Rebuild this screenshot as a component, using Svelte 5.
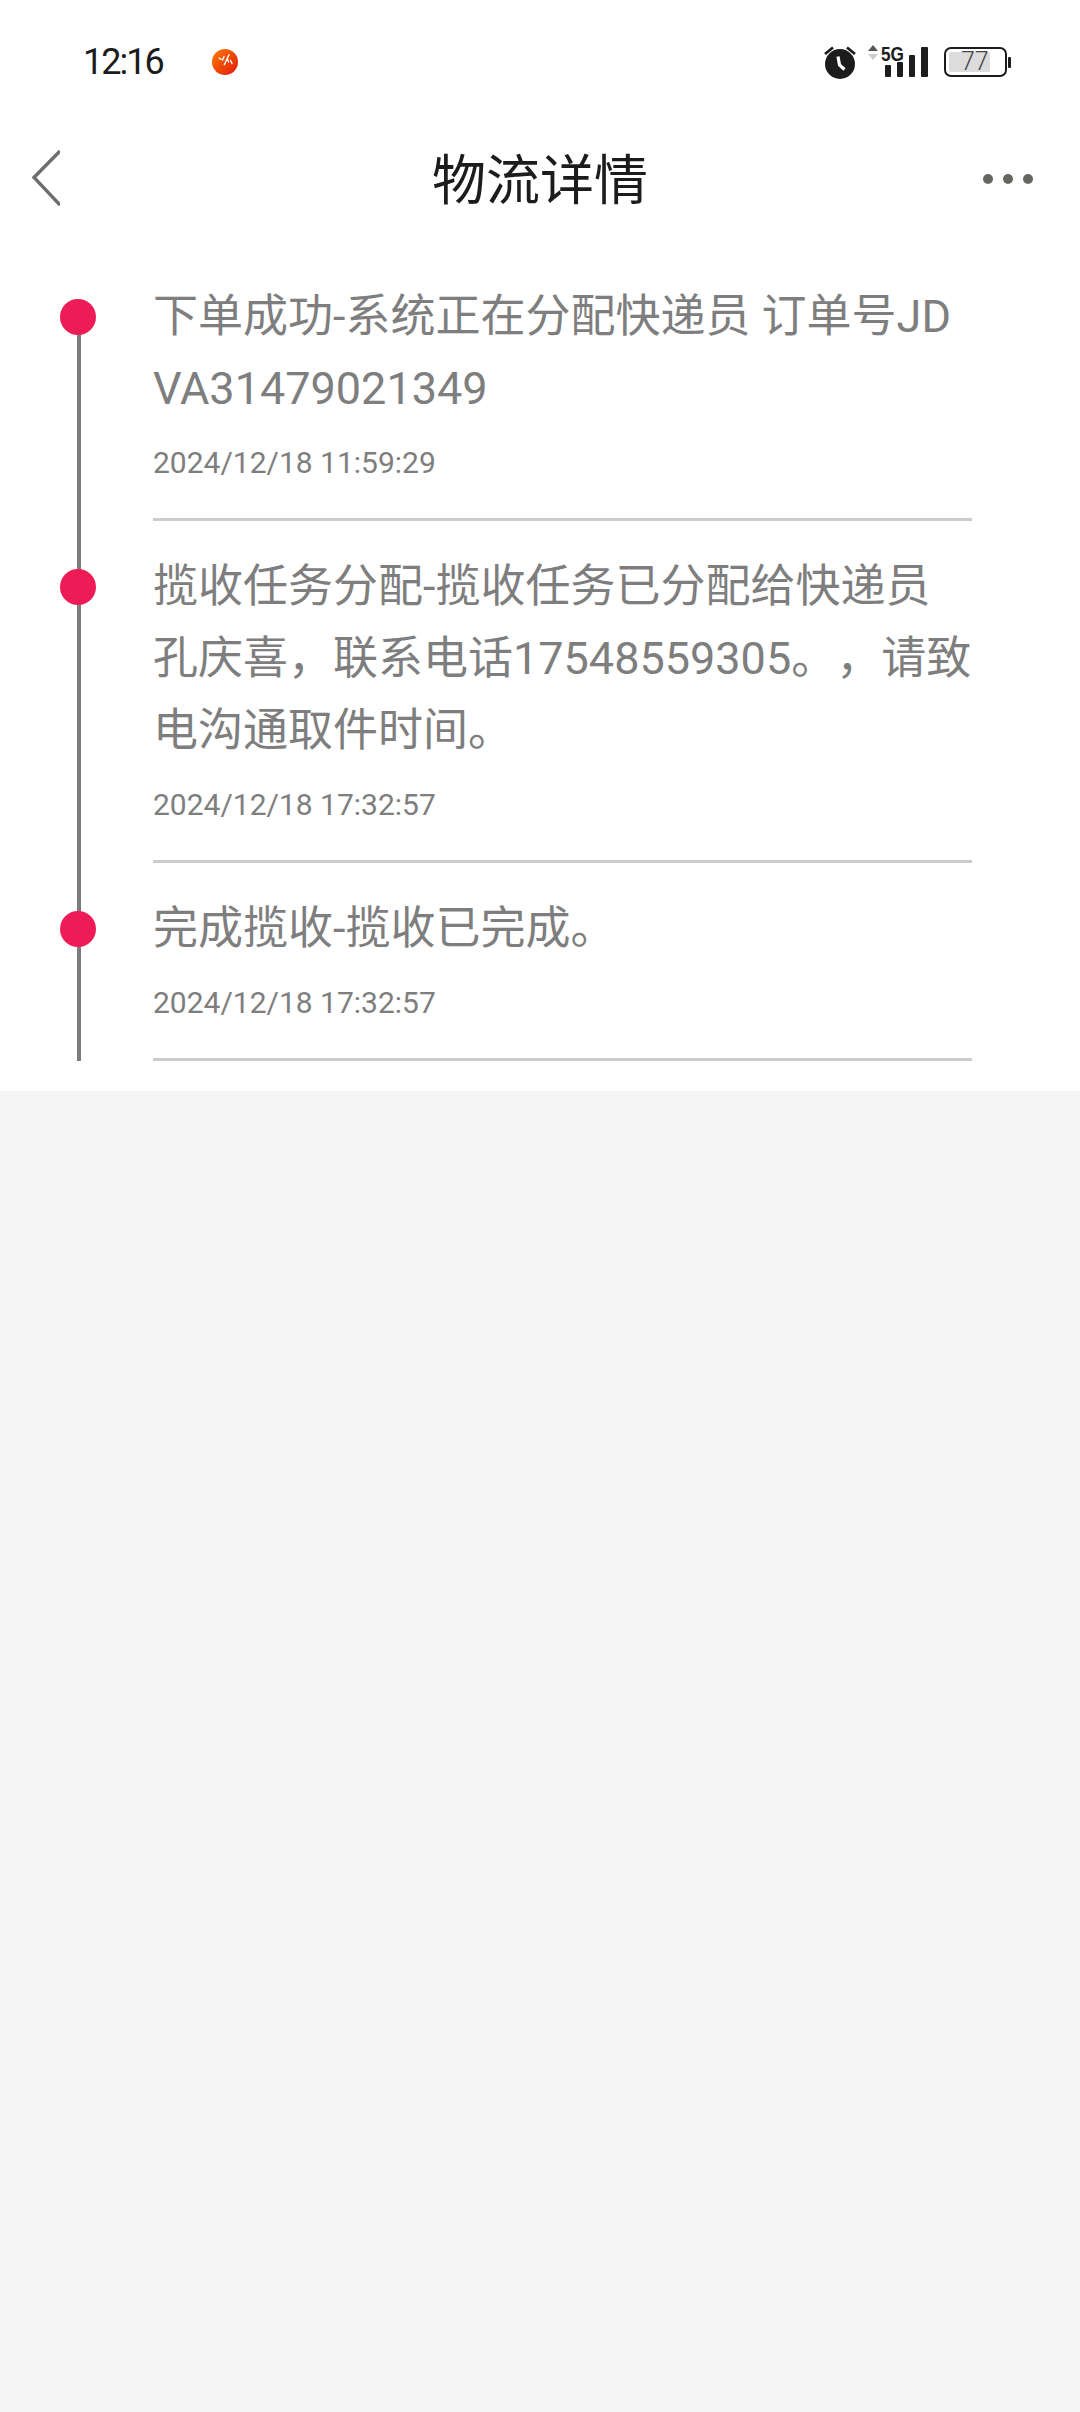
<script>
  const events = [
    { text: '下单成功-系统正在分配快递员 订单号JDVA31479021349', time: '2024/12/18 11:59:29' },
    { text: '揽收任务分配-揽收任务已分配给快递员孔庆喜，联系电话17548559305。，请致电沟通取件时间。', time: '2024/12/18 17:32:57' },
    { text: '完成揽收-揽收已完成。', time: '2024/12/18 17:32:57' }
  ];
</script>

<div class="page">
  <div class="status">
    <div class="status-left">
      <span class="clock">12:16</span>
      <svg class="app-icon" viewBox="0 0 26 26" width="26" height="26">
        <defs>
          <linearGradient id="appg" x1="0" y1="0" x2="1" y2="1">
            <stop offset="0" stop-color="#ff7a00" />
            <stop offset="1" stop-color="#e01a10" />
          </linearGradient>
        </defs>
        <circle cx="13" cy="13" r="13" fill="url(#appg)" />
        <path d="M7 9l2 1.300M12 7.500l-1.500 3.500M17 5.700L12.300 15.700M15.500 10l1 3M18.500 11.500l1.500 3" stroke="#fff" stroke-width="1.400" stroke-linecap="round" fill="none" />
      </svg>
    </div>
    <div class="status-right">
      <svg class="alarm" viewBox="0 0 32 34" width="32" height="34">
        <path d="M1 9L9 2.500M31 9L23 2.500" stroke="#1c1c1c" stroke-width="2.800" fill="none" />
        <circle cx="16" cy="19" r="15" fill="#1c1c1c" />
        <path d="M14 11.500l1.500 8.500 5 4.500" stroke="#fff" stroke-width="3.200" fill="none" />
      </svg>
      <svg class="signal" viewBox="0 -6 60 44" width="60" height="44">
        <path d="M0 6L5 0l5 6z" fill="#555" />
        <path d="M0 9L5 15l5-6z" fill="#ccc" />
        <text x="13" y="15.500" class="fiveg" textLength="23" lengthAdjust="spacingAndGlyphs">5G</text>
        <rect x="17" y="20" width="6" height="12" rx="1" fill="#1c1c1c" />
        <rect x="29" y="17" width="6" height="15" rx="1" fill="#1c1c1c" />
        <rect x="41" y="10" width="6" height="22" rx="1" fill="#1c1c1c" />
        <rect x="53" y="2" width="7" height="30" rx="1" fill="#1c1c1c" />
      </svg>
      <div class="battery">
        <div class="battery-body">
          <div class="battery-fill"></div>
          <span class="battery-num">77</span>
        </div>
        <div class="battery-nub"></div>
      </div>
    </div>
  </div>

  <header class="nav">
    <svg class="back" viewBox="0 0 28 56" width="28" height="56">
      <path d="M28 1L2 27.500 28 55" stroke="#6e6e6e" stroke-width="3.400" fill="none" />
    </svg>
    <h1>物流详情</h1>
    <div class="more"><i></i><i></i><i></i></div>
  </header>

  <main class="list">
    {#each events as e, i}
      <section class="row">
        <div class="axis">
          <div class="rail" class:first={i === 0}></div>
          <div class="dot"></div>
        </div>
        <div class="body">
          <p class="text">{e.text}</p>
          <p class="time">{e.time}</p>
        </div>
      </section>
    {/each}
  </main>
</div>

<style>
  :global(body) {
    margin: 0;
    background: #f5f5f5;
  }
  .page {
    font-family: Roboto, "Noto Sans CJK SC", sans-serif;
    text-spacing-trim: space-all;
    width: 1080px;
    height: 2412px;
    background: #f5f5f5;
    overflow: hidden;
  }
  .status {
    height: 124px;
    box-sizing: border-box;
    background: #fff;
    display: flex;
    justify-content: space-between;
    align-items: flex-start;
    padding: 40px 69px 0 83px;
  }
  .status-left {
    display: flex;
    align-items: center;
    gap: 48px;
    height: 44px;
  }
  .clock {
    font-size: 36px;
    letter-spacing: -2px;
    color: #1c1c1c;
    line-height: 44px;
    width: 81px;
  }
  .status-right {
    display: flex;
    align-items: center;
    height: 44px;
  }
  .signal {
    margin-left: 12px;
    margin-top: -2px;
  }
  .fiveg {
    font-family: "Liberation Sans", sans-serif;
    font-size: 21px;
    font-weight: 700;
    fill: #1c1c1c;
  }
  .battery {
    display: flex;
    align-items: center;
    gap: 1px;
    margin-left: 16px;
  }
  .battery-body {
    position: relative;
    width: 63px;
    height: 30px;
    box-sizing: border-box;
    border: 2.500px solid #1c1c1c;
    border-radius: 7px;
    padding: 3px;
  }
  .battery-fill {
    width: 41px;
    height: 100%;
    background: #dcdcdc;
    border-radius: 2px;
  }
  .battery-num {
    position: absolute;
    left: 15px;
    top: 0;
    font-size: 25px;
    line-height: 25px;
    color: #444;
    font-weight: 300;
  }
  .battery-nub {
    width: 3px;
    height: 11px;
    background: #1c1c1c;
    border-radius: 1px;
  }
  .nav {
    height: 110px;
    background: #fff;
    display: flex;
    align-items: center;
    justify-content: space-between;
    padding: 0 47px 0 32px;
    position: relative;
  }
  .nav h1 {
    position: absolute;
    left: 0;
    right: 0;
    top: 3px;
    margin: 0;
    text-align: center;
    font-size: 54px;
    font-weight: 400;
    color: #1c1c1c;
    line-height: 110px;
  }
  .back {
    display: block;
    margin-top: -2px;
  }
  .more {
    display: flex;
    gap: 10px;
  }
  .more i {
    width: 10px;
    height: 10px;
    border-radius: 50%;
    background: #666660;
  }
  .list {
    background: #fff;
    height: 857px;
    padding-top: 47px;
    box-sizing: border-box;
  }
  .row {
    display: flex;
  }
  .axis {
    width: 153px;
    flex: none;
    position: relative;
  }
  .rail {
    position: absolute;
    left: 77px;
    top: 0;
    bottom: 0;
    width: 4px;
    background: #7c7c7c;
  }
  .rail.first {
    top: 36px;
  }
  .dot {
    position: absolute;
    left: 60px;
    top: 18px;
    width: 36px;
    height: 36px;
    border-radius: 50%;
    background: #ee1c56;
  }
  .body {
    width: 819px;
    border-bottom: 3px solid #cccccc;
    box-sizing: border-box;
    margin-bottom: 30px;
  }
  .row:last-child .body {
    margin-bottom: 0;
  }
  .text {
    margin: 0;
    font-size: 45px;
    line-height: 72px;
    color: #7e7e7e;
    word-break: break-all;
  }
  .time {
    margin: 0;
    padding: 20px 0 37px;
    font-size: 30px;
    line-height: 36px;
    color: #7e7e7e;
  }
</style>
